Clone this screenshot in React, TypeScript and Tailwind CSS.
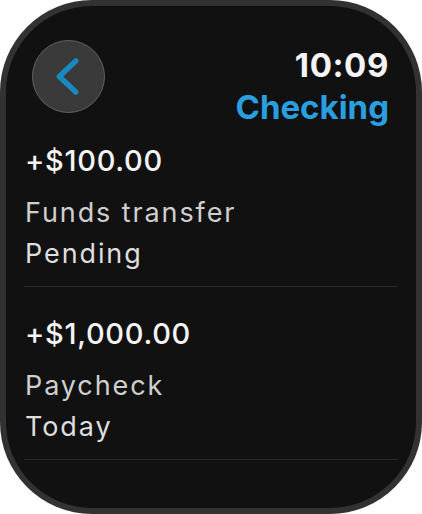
const rows = [
  { amount: "+$100.00", label: "Funds transfer", status: "Pending" },
  { amount: "+$1,000.00", label: "Paycheck", status: "Today" },
];

export default function App() {
  return (
    <div className="w-[422px] h-[514px] bg-white">
      <div className="h-full rounded-[92px] bg-[#323232] p-[6px]">
        <div
          className="h-full rounded-[86px] bg-[#111111] overflow-hidden"
          style={{ fontFamily: "Inter, 'Noto Sans', sans-serif" }}
        >
          {/* header */}
          <div className="flex justify-between items-start pt-[34px] pl-[26px] pr-[27px]">
            <button className="w-[73px] h-[73px] rounded-full bg-[#3a3a3a] border border-[#626262] flex items-center justify-center">
              <svg width="73" height="73" viewBox="0 0 73 73" fill="none">
                <path
                  d="M44 20.5 L27 36.5 L44 52.5"
                  stroke="#1a88c2"
                  strokeWidth="5.5"
                  strokeLinecap="round"
                  strokeLinejoin="round"
                />
              </svg>
            </button>
            <div className="mt-[4px] text-right font-bold text-[33px] leading-[42px]">
              <div className="text-[#f5f5f7] tracking-[0.6px]">10:09</div>
              <div className="text-[#2a9fe0]">Checking</div>
            </div>
          </div>

          {/* transactions */}
          <div className="px-[18px]">
            {rows.map((r, i) => (
              <div
                key={r.amount}
                className={`${i === 0 ? "pt-[13px]" : "pt-[27px]"} pb-[12px] pl-[1px] border-b border-[#2a2a2a]`}
              >
                <div className="text-[29px] leading-[40px] font-medium tracking-[0.7px] text-[#f4f4f4]">
                  {r.amount}
                </div>
                <div className="mt-[11px] text-[27px] leading-[41px] tracking-[1.9px] text-[#cfcfcf]">
                  {r.label}
                </div>
                <div className="text-[27px] leading-[41px] tracking-[1.9px] text-[#dedede]">{r.status}</div>
              </div>
            ))}
          </div>
        </div>
      </div>
    </div>
  );
}
